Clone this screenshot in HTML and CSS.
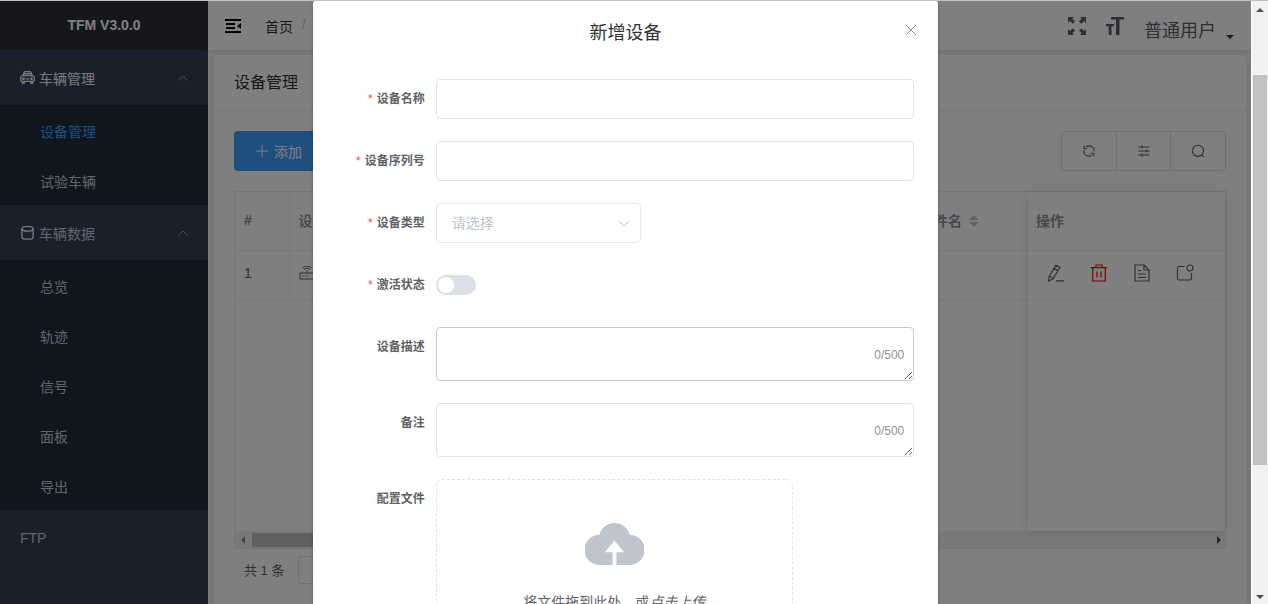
FILE: index.html
```html
<!DOCTYPE html>
<html lang="zh-CN">
<head>
<meta charset="utf-8">
<meta name="viewport" content="width=device-width, initial-scale=1">
<title>设备管理 - TFM</title>
<link rel="stylesheet" href="styles.css">
</head>
<body>
<div class="viewport">
  <div class="app">
    <nav class="sidebar">
      <h1 class="logo">TFM V3.0.0</h1>
      <button class="menu-title menu-title--on" type="button">
        <svg class="menu-icon" viewBox="0 0 16 16"><path d="M3 6l1.200-3.200Q4.600 1.700 5.700 1.700h4.600q1.100 0 1.500 1.100L13 6M2.500 6h11Q15.200 6.500 15.200 8v3q0 1.200-1.200 1.200H2Q.8 12.200.8 11V8Q.8 6.500 2.500 6zM2.500 12.200v2h2v-2M11.500 12.200v2h2v-2M6 9.500h4M4.500 4h7"/><circle cx="3.700" cy="9.200" r=".7"/><circle cx="12.300" cy="9.200" r=".7"/></svg>
        <span>车辆管理</span>
        <svg class="menu-arrow" viewBox="0 0 10 6"><path d="M.7 5.300L5 1l4.300 4.300"/></svg>
      </button>
      <ul class="submenu">
        <li><a class="menu-item menu-item--active" href="#device">设备管理</a></li>
        <li><a class="menu-item" href="#vehicle">试验车辆</a></li>
      </ul>
      <button class="menu-title" type="button">
        <svg class="menu-icon menu-icon--light" viewBox="0 0 16 16"><ellipse cx="8" cy="4" rx="6" ry="2.600"/><path d="M2 4v8.500Q2 15 5 15h6q3 0 3-2.500V4"/></svg>
        <span>车辆数据</span>
        <svg class="menu-arrow" viewBox="0 0 10 6"><path d="M.7 5.300L5 1l4.300 4.300"/></svg>
      </button>
      <ul class="submenu">
        <li><a class="menu-item" href="#overview">总览</a></li>
        <li><a class="menu-item" href="#track">轨迹</a></li>
        <li><a class="menu-item" href="#signal">信号</a></li>
        <li><a class="menu-item" href="#panel">面板</a></li>
        <li><a class="menu-item" href="#export">导出</a></li>
      </ul>
      <a class="menu-title" href="#ftp">FTP</a>
    </nav>

    <div class="main">
      <header class="topbar">
        <button class="icon-button" type="button" aria-label="收起菜单">
          <svg class="fold-icon" viewBox="0 0 16 14"><path d="M0 0h16v2H0zM1 4h9v2H1zM1 8h9v2H1zM0 12h16v2H0zM16 4v6l-4-3z"/></svg>
        </button>
        <div class="breadcrumb"><a href="#home">首页</a><span class="slash">/</span></div>
        <div class="tools">
          <button class="icon-button" type="button" aria-label="全屏">
            <svg class="tool-icon" viewBox="0 0 18 18"><path d="M0 0h6L4.300 1.700 7 4.400 4.700 6.700 2 4 0 6zM18 0v6l-2-2-2.700 2.700L11 4.400l2.700-2.700L12 0zM0 18v-6l2 2 2.700-2.700L7 13.600l-2.700 2.700L6 18zM18 18h-6l1.700-1.700-2.700-2.700 2.300-2.300L16 14l2-2z"/></svg>
          </button>
          <button class="icon-button" type="button" aria-label="字号">
            <svg class="tool-icon" viewBox="0 0 18 18"><path d="M5 0h13v2.500h-4.500V18h-3.500V2.500H5zM0 7h8v2.300H5.500V18H2.700V9.300H0z"/></svg>
          </button>
          <button class="user" type="button">普通用户
            <svg class="caret" viewBox="0 0 8 4"><path d="M0 0h8L4 4z"/></svg>
          </button>
        </div>
      </header>

      <section class="card">
        <h2 class="card-title">设备管理</h2>
        <div class="card-body">
          <div class="toolbar">
            <button class="add" type="button"><svg class="plus" viewBox="0 0 12 12"><path d="M0 6h12M6 0v12"/></svg>添加</button>
            <div class="button-group">
              <button type="button" aria-label="刷新"><svg class="group-icon" viewBox="0 0 14 14"><path d="M4 2.500Q8.800.6 11.400 4 12.300 5.600 12 7.500M10 11.500Q5.200 13.400 2.600 10 1.700 8.400 2 6.500M2.200 1.800v3h3M11.800 12.200v-3h-3"/></svg></button>
              <button type="button" aria-label="筛选"><svg class="group-icon" viewBox="0 0 14 14"><path d="M1.500 3h11M1.500 7h11M1.500 11h11M5 1.500v3M9.500 5.500v3M5 9.500v3"/></svg></button>
              <button type="button" aria-label="搜索"><svg class="group-icon" viewBox="0 0 14 14"><circle cx="7" cy="6.800" r="5.600"/><path d="M10.700 11l2 2"/></svg></button>
            </div>
          </div>
          <div class="table-box">
            <table class="table">
              <colgroup><col class="col-index"><col><col class="col-file"><col class="col-actions"></colgroup>
              <thead><tr><th>#</th><th>设备名称</th><th>配置文件名<svg class="sort" viewBox="0 0 10 12"><path d="M0 5l5-5 5 5zM0 7h10l-5 5z"/></svg></th><th>操作</th></tr></thead>
              <tbody><tr>
                <td>1</td>
                <td><svg class="router" viewBox="0 0 16 14"><path d="M1 7h14v6H1zM8 7V4.500M5 3.500q3-2.800 6 0M3.500 2q4.500-3.800 9 0M3 10h1.500M5.700 10h1.500M8.400 10h1.500"/></svg></td>
                <td></td>
                <td><div class="actions">
                  <button class="icon-button" type="button" aria-label="编辑"><svg class="row-icon" viewBox="0 0 18 18"><path d="M8.800 1.200l4 2.300-6.600 11.300-4.400 2.200.4-4.500zM7 4.300l4 2.300M2.200 12.500q2.800 0 4 2.300M9 16.800h8"/></svg></button>
                  <button class="icon-button icon-button--danger" type="button" aria-label="删除"><svg class="row-icon" viewBox="0 0 18 18"><path d="M1 3.700h16M6 3.500V1h6v2.500M2.700 4v13h12.600V4M7 7.500v6M11 7.500v6"/></svg></button>
                  <button class="icon-button" type="button" aria-label="详情"><svg class="row-icon" viewBox="0 0 18 18"><path d="M2 1h9l5 5v11H2zM11 1v5h5M5 6.500h3M5 10h8M5 13.500h8"/></svg></button>
                  <button class="icon-button" type="button" aria-label="消息"><svg class="row-icon" viewBox="0 0 18 18"><path d="M8.500 2.500H3q-1.500 0-1.500 1.500v10.500Q1.500 16 3 16h11q1.500 0 1.500-1.500V9"/><circle cx="14" cy="4" r="3"/></svg></button>
                </div></td>
              </tr></tbody>
            </table>
            <div class="fixed-shadow"></div>
            <div class="hscroll"><span class="arrow-left"></span><span class="hthumb"></span><span class="arrow-right"></span></div>
          </div>
          <footer class="pager"><span>共 1 条</span><button class="page-size" type="button">10条/页</button></footer>
        </div>
      </section>
    </div>

    <div class="mask">
      <div class="dialog" role="dialog" aria-labelledby="dialog-title">
        <header class="dialog-head">
          <h2 id="dialog-title">新增设备</h2>
          <button class="close" type="button" aria-label="关闭"><svg viewBox="0 0 12 12"><path d="M1 1l10 10M11 1L1 11"/></svg></button>
        </header>
        <form class="form">
          <div class="row"><label class="label required" for="name">设备名称</label><input class="input" id="name" type="text"></div>
          <div class="row"><label class="label required" for="serial">设备序列号</label><input class="input" id="serial" type="text"></div>
          <div class="row"><label class="label required" for="kind">设备类型</label>
            <div class="select-box"><select class="input select" id="kind"><option>请选择</option></select><svg class="select-arrow" viewBox="0 0 12 7"><path d="M1 1l5 5 5-5"/></svg></div></div>
          <div class="row"><label class="label required" for="active">激活状态</label><div class="switch-box"><input class="switch" id="active" type="checkbox"></div></div>
          <div class="row"><label class="label" for="desc">设备描述</label><div class="area-box"><textarea class="input area area--hover" id="desc" rows="2"></textarea><span class="count">0/500</span></div></div>
          <div class="row"><label class="label" for="note">备注</label><div class="area-box"><textarea class="input area" id="note" rows="2"></textarea><span class="count">0/500</span></div></div>
          <div class="row"><span class="label">配置文件</span>
            <button class="upload" type="button">
              <svg class="cloud" viewBox="0 0 60 46"><path class="cloud-body" d="M15 45A15 15 0 0 1 14.500 14A16 16 0 0 1 45.500 14A15.500 15.500 0 0 1 45 45z"/><path class="cloud-arrow" d="M30 20l10 12h-8v13h-4V32h-8z"/></svg>
              <span>将文件拖到此处，或<em>点击上传</em></span>
            </button></div>
        </form>
      </div>
    </div>
  </div>
  <div class="vscroll"><span class="arrow-up"></span><span class="vthumb"></span><span class="arrow-down"></span></div>
</div>
</body>
</html>
```
FILE: styles.css
```css
* { box-sizing: border-box; }
body {
  margin: 0;
  font-family: "Liberation Sans", "Noto Sans CJK SC", sans-serif;
  font-size: 14px;
  color: #606266;
}
h1, h2, ul { margin: 0; padding: 0; font-weight: 400; }
ul { list-style: none; }
a { color: inherit; text-decoration: none; }
button, input, select, textarea { font: inherit; color: inherit; }
button { padding: 0; border: 0; background: none; }
svg { display: block; flex: none; fill: none; stroke: currentColor; }

.viewport { display: flex; height: 100vh; overflow: hidden; border-top: 1px solid #c0c0c0; }
.app { position: relative; display: flex; flex: 1; min-width: 0; overflow: hidden; }

/* Sidebar */
.sidebar { width: 208px; flex: none; background: #304156; color: #bfcbd9; }
.logo { background: #2b2f3a; color: #fff; font-size: 14px; font-weight: 700; line-height: 49px; text-align: center; }
.menu-title { display: flex; align-items: center; gap: 4px; width: 100%; height: 55px; padding: 0 20px; text-align: left; }
.menu-title--on { color: #f4f4f5; }
.menu-icon { width: 15px; height: 15px; stroke-width: 1.4; }
.menu-icon--light { color: #f4f4f5; }
.menu-arrow { width: 10px; height: 6px; margin-left: auto; color: #909399; }
.submenu { display: grid; gap: 1px; padding-top: 1px; background: #1f2d3d; }
.menu-item { display: block; padding: 3px 0 0 40px; line-height: 46px; }
.menu-item--active { color: #409eff; }

/* Page */
.main { display: flex; flex: 1; flex-direction: column; min-width: 0; background: #f8f8f8; }
.topbar { display: flex; align-items: center; height: 49px; padding: 0 17px; background: #fff; box-shadow: 0 1px 4px rgba(0, 21, 41, .12); }
.icon-button { display: flex; }
.fold-icon { width: 16px; height: 14px; fill: #000; stroke: none; }
.breadcrumb { display: flex; gap: 9px; padding-left: 24px; color: #303133; }
.slash { color: #c0c4cc; }
.tools { display: flex; align-items: center; gap: 20px; margin-left: auto; color: #5a5e66; }
.tool-icon { width: 18px; height: 18px; fill: currentColor; stroke: none; }
.user { display: flex; align-items: flex-end; gap: 10px; padding-top: 10px; font-size: 18px; line-height: 24px; }
.caret { width: 8px; height: 4px; margin-bottom: 4px; fill: #303133; stroke: none; }
.card { display: flex; flex: 1; flex-direction: column; margin: 4px 4px 0 5px; border: 1px solid #ebeef5; border-bottom: 0; border-radius: 4px 4px 0 0; background: #fff; box-shadow: 0 2px 12px rgba(0, 0, 0, .1); }
.card-title { padding: 0 20px; border-bottom: 1px solid #ebeef5; color: #303133; font-size: 16px; line-height: 55px; }
.card-body { display: flex; flex: 1; flex-direction: column; padding: 20px 20px 0; }
.toolbar { display: flex; justify-content: space-between; margin-bottom: 20px; }
.add { display: flex; align-items: center; gap: 6px; height: 40px; padding: 0 22px; border-radius: 4px; background: #409eff; color: #fff; }
.plus { width: 12px; height: 12px; }
.button-group { display: flex; width: 165px; height: 40px; border: 1px solid #dcdfe6; border-radius: 4px; }
.button-group button { display: grid; flex: 1; place-items: center; }
.button-group button + button { border-left: 1px solid #dcdfe6; }
.group-icon { width: 14px; height: 14px; stroke-width: 1.1; }

/* Table */
.table-box { position: relative; display: flex; flex: 1; flex-direction: column; border: 1px solid #e8ebf2; }
.table { width: 100%; table-layout: fixed; border-collapse: collapse; }
.table th, .table td { height: 49px; padding: 0 9px; border-bottom: 1px solid #ebeef5; text-align: left; }
.table th { height: 58px; padding-bottom: 2px; color: #909399; white-space: nowrap; }
.table td { padding-bottom: 4px; }
.table th:first-child, .table td:first-child { border-right: 1px solid #ebeef5; }
.col-index { width: 54px; }
.col-file { width: 144px; }
.col-actions { width: 198px; }
.sort { display: inline-block; width: 10px; height: 12px; margin-left: 7px; vertical-align: -1px; fill: #c0c4cc; stroke: none; }
.router { width: 16px; height: 14px; }
.actions { display: flex; gap: 25px; padding-left: 11px; }
.row-icon { width: 18px; height: 18px; stroke-width: 1.2; }
.icon-button--danger { color: #f00; }
.fixed-shadow { position: absolute; top: 0; right: 0; bottom: 17px; width: 197px; box-shadow: 0 0 10px rgba(0, 0, 0, .12); }
.hscroll { display: flex; align-items: center; height: 17px; margin-top: auto; padding: 0 4px 0 6px; background: #f1f1f1; }
.hthumb { width: 55%; height: 14px; margin-left: 7px; background: #c1c1c1; }
.arrow-left { border: 4px solid transparent; border-left: 0; border-right-color: #8a8a8a; }
.arrow-right { margin-left: auto; border: 4px solid transparent; border-right: 0; border-left-color: #505050; }
.pager { display: flex; gap: 14px; align-items: center; height: 55px; padding: 0 0 14px 10px; font-size: 13px; }
.page-size { width: 100px; height: 28px; border: 1px solid #dcdfe6; border-radius: 3px; }

/* Dialog */
.mask { position: absolute; inset: 0; background: rgba(0, 0, 0, .5); }
.dialog { width: 50%; min-height: 100%; margin: 0 auto; border-radius: 2px; background: #fff; box-shadow: 0 1px 3px rgba(0, 0, 0, .3); }
.dialog-head { position: relative; padding: 20px 0 22px; color: #303133; font-size: 18px; line-height: 24px; text-align: center; }
.dialog-head h2 { font-size: 18px; }
.close { position: absolute; top: 23px; right: 21px; color: #909399; }
.close svg { width: 12px; height: 12px; }
.form { display: grid; gap: 22px; padding: 12px 24px 0; }
.row { display: grid; grid-template-columns: 88px minmax(0, 1fr); gap: 11px; align-items: start; }
.label { font-size: 12px; font-weight: 700; line-height: 40px; text-align: right; white-space: nowrap; }
.required::before { content: "*"; margin-right: 4px; color: #ff4949; font-weight: 400; }
.input { display: block; width: 100%; height: 40px; padding: 0 15px; border: 1px solid #dfe2e9; border-radius: 4px; background: #fff; outline: 0; }
.select-box { position: relative; width: 205px; }
.select { appearance: none; border-color: #e4e7ed; color: #c0c4cc; }
.select-arrow { position: absolute; top: 17px; right: 11px; width: 12px; height: 7px; color: #c0c4cc; }
.switch-box { display: flex; align-items: center; height: 40px; }
.switch { appearance: none; width: 40px; height: 20px; margin: 0; padding: 2px; border-radius: 10px; background: #dcdfe6; }
.switch::before { content: ""; display: block; width: 16px; height: 16px; border-radius: 50%; background: #fff; }
.area-box { position: relative; }
.area { height: 54px; padding: 5px 15px; resize: vertical; }
.area--hover { border-color: #c8cbd2; }
.count { position: absolute; right: 10px; bottom: 18px; color: #909399; font-size: 12px; line-height: 16px; }
.upload { display: flex; flex-direction: column; align-items: center; gap: 25px; width: 357px; max-width: 100%; height: 180px; padding-top: 41px; border: 1px dashed #e4e4e4; border-radius: 6px; }
.cloud { width: 59px; height: 45px; stroke: none; }
.cloud-body { fill: #c0c4cc; }
.cloud-arrow { fill: #fff; }

/* Window scrollbar */
.vscroll { display: flex; flex-direction: column; align-items: center; width: 17px; padding: 7px 0 5px; border-left: 1px solid #fff; background: #f1f1f1; }
.vthumb { width: 14px; height: 66%; margin-top: 63px; background: #c1c1c1; }
.arrow-up { border: 4px solid transparent; border-top: 0; border-bottom-color: #505050; }
.arrow-down { margin-top: auto; border: 4px solid transparent; border-bottom: 0; border-top-color: #505050; }
```
